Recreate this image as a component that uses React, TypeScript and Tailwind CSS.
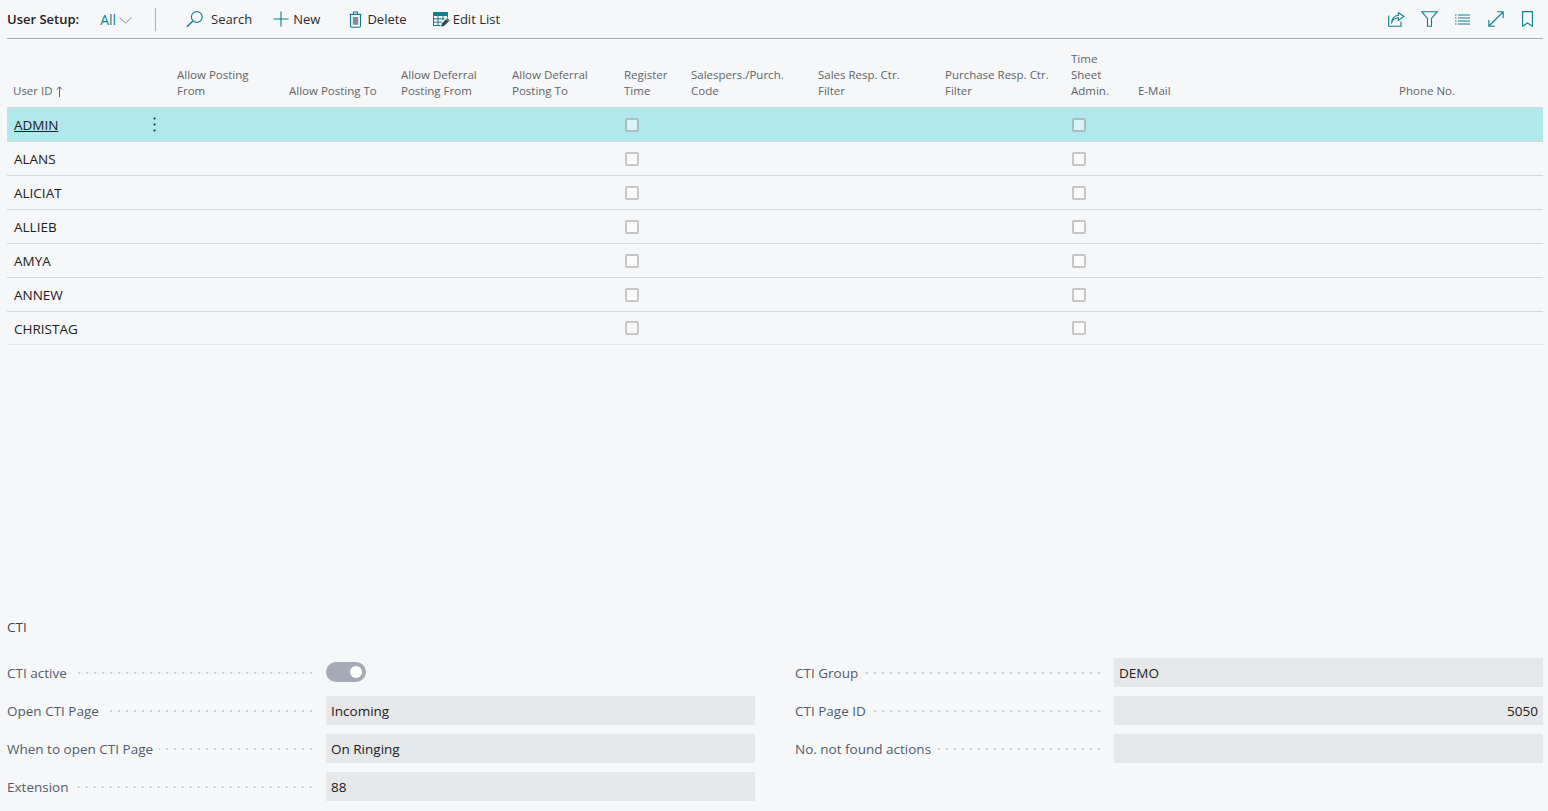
const columns = "grid grid-cols-[164px_112px_112px_111px_112px_67px_127px_127px_126px_67px_261px_1fr]";

const users = ["ADMIN", "ALANS", "ALICIAT", "ALLIEB", "AMYA", "ANNEW", "CHRISTAG"];

const Check = ({ active }: { active?: boolean }) => (
  <div
    className={
      "w-[14px] h-[14px] rounded-[2px] border-2 " +
      (active ? "bg-[#d8f4f7] border-[#a9bcc0]" : "bg-[#fbfbfc] border-[#c4c6c8]")
    }
  ></div>
);

const SearchIcon = () => (
  <svg width="18" height="18" viewBox="0 0 18 18" fill="none" stroke="#0f7f8c" strokeWidth="1.1">
    <circle cx="10.8" cy="7" r="5.4" />
    <path d="M6.9 10.9L1 16.8" strokeWidth="1.4" />
  </svg>
);

const PlusIcon = () => (
  <svg width="16" height="16" viewBox="0 0 16 16" fill="none" stroke="#0f7f8c" strokeWidth="1.1">
    <path d="M8 .5V15.5M.5 8H15.5" />
  </svg>
);

const TrashIcon = () => (
  <svg width="13" height="17" viewBox="0 0 13 17" fill="none" stroke="#0f7f8c" strokeWidth="1.1">
    <path d="M1.5 3.5H11.5V15C11.5 15.8 11 16.2 10.3 16.2H2.7C2 16.2 1.5 15.8 1.5 15Z" />
    <path d="M.5 3.2H12.5M4.5 3V1H8.5V3" />
    <path d="M3.8 6H9.2V13.8H3.8Z" fill="#7f8f98" stroke="none" />
  </svg>
);

const EditListIcon = () => (
  <svg width="17" height="15" viewBox="0 0 17 15" fill="none">
    <path d="M.5 .5H14.5V3.5H.5Z" fill="#0f7f8c" stroke="#0f7f8c" />
    <path d="M.5 3.5V13.5H7.5M5 3.5V13.5M10 3.5V8M.5 6.8H11.5M.5 10.2H8.5M14.5 3.5V5.5" stroke="#0f7f8c" />
    <path d="M8 14.7L9 11.3L14.3 6L16.7 8.4L11.4 13.7Z" fill="#3a4654" />
    <path d="M13.4 6.9L15.8 9.3" stroke="#f6f7f9" strokeWidth="0.6" />
  </svg>
);

const ShareIcon = () => (
  <svg width="17" height="15" viewBox="0 0 17 15" fill="none" stroke="#0f7f8c" strokeWidth="1.1">
    <path d="M.7 3.5V14.3H13V9.5" />
    <path d="M3.5 11.5C4 8 6.5 6 10.3 5.7V8.5L16 4.2L10.3 .7V3.2C6 3.5 3.5 7 3.5 11.5Z" />
  </svg>
);

const FilterIcon = () => (
  <svg width="17" height="16" viewBox="0 0 17 16" fill="none" stroke="#0f7f8c" strokeWidth="1.1">
    <path d="M.7 .7H16.3L10.5 7.5V15.3H6.5V7.5Z" />
  </svg>
);

const ListIcon = () => (
  <svg width="15" height="11" viewBox="0 0 15 11" fill="none" stroke="#0f7f8c" strokeWidth="1">
    <path d="M0 1H1.5M3 1H15M0 4H1.5M3 4H15M0 7H1.5M3 7H15M0 10H1.5M3 10H15" />
  </svg>
);

const ExpandIcon = () => (
  <svg width="16" height="16" viewBox="0 0 16 16" fill="none" stroke="#0f7f8c" strokeWidth="1.1">
    <path d="M1 15L15 1M9 .8H15.2V7M.8 9V15.2H7" />
  </svg>
);

const BookmarkIcon = () => (
  <svg width="11" height="16" viewBox="0 0 11 16" fill="none" stroke="#0f7f8c" strokeWidth="1.1">
    <path d="M.6 .6H10.4V15.2L5.5 12L.6 15.2Z" />
  </svg>
);

const SortArrow = () => (
  <svg className="inline-block ml-[3px] mb-[1px]" width="7" height="11" viewBox="0 0 7 11" fill="none" stroke="#5f6468">
    <path d="M3.5 11V1M.8 3.5L3.5 .8L6.2 3.5" />
  </svg>
);

const Action = ({ icon, label, className }: { icon: React.ReactNode; label: string; className: string }) => (
  <div className={"flex items-center text-[13px] text-[#2b2b2b] " + className}>
    {icon}
    <span className="mt-[2px]">{label}</span>
  </div>
);

const Header = ({ children }: { children: React.ReactNode }) => (
  <div className="flex items-end pb-[8px] pl-[6px] text-[11.5px] leading-[16px] text-[#5f6468]">
    <div>{children}</div>
  </div>
);

const Label = ({ text }: { text: string }) => (
  <div className="w-[319px] shrink-0 flex items-center pr-[11px]">
    <span className="mt-[2px] text-[13.5px] text-[#505c6b] whitespace-nowrap mr-[6px]">{text}</span>
    <div className="flex-1 h-[4px] bg-[radial-gradient(circle,#c9ccd0_1px,transparent_1.2px)] bg-[length:8px_4px] bg-right"></div>
  </div>
);

const Field = ({ label, value, right }: { label: string; value?: string; right?: boolean }) => (
  <div className="flex items-center h-[29px]">
    <Label text={label} />
    <div
      className={
        "flex-1 h-[29px] bg-[#e6e7e9] flex items-center px-[5px] text-[13.5px] text-[#212121] " +
        (right ? "justify-end" : "")
      }
    >
      <span className="mt-[2px]">{value}</span>
    </div>
  </div>
);

const App = () => {
  return (
    <div className="h-[811px] overflow-hidden flex flex-col bg-[#f6f7f9] pl-[7px] pr-[5px] font-['Open_Sans','Noto_Sans',sans-serif]">
      <div className="h-[39px] shrink-0 flex items-center border-b border-[#a9afb6]">
        <span className="mt-[2px] text-[13px] font-semibold text-[#212121]">User Setup:</span>
        <span className="ml-[21px] text-[14px] font-medium text-[#0f7f8c]">All</span>
        <svg className="ml-[3px] mt-[3px]" width="13" height="7" viewBox="0 0 13 7" fill="none" stroke="#7d8a94">
          <path d="M.5 .5L6.5 6L12.5 .5" />
        </svg>
        <div className="ml-[23px] w-px h-[23px] bg-[#a9afb6]"></div>
        <div className="ml-[30px] flex items-center">
          <Action className="gap-[7px]" icon={<SearchIcon />} label="Search" />
          <Action className="gap-[4px] ml-[21px]" icon={<PlusIcon />} label="New" />
          <Action className="gap-[5px] ml-[29px]" icon={<TrashIcon />} label="Delete" />
          <Action className="gap-[3px] ml-[26px]" icon={<EditListIcon />} label="Edit List" />
        </div>
        <div className="ml-auto flex items-center pr-[5px]">
          <div className="w-[33px] flex justify-center"><ShareIcon /></div>
          <div className="w-[33px] flex justify-center"><FilterIcon /></div>
          <div className="w-[33px] flex justify-center"><ListIcon /></div>
          <div className="w-[33px] flex justify-center"><ExpandIcon /></div>
          <div className="w-[26px] flex justify-center pl-[4px]"><BookmarkIcon /></div>
        </div>
      </div>

      <div className={columns + " h-[69px] shrink-0 border-b border-[#d6d7d9]"}>
        <Header>User ID<SortArrow /></Header>
        <Header>Allow Posting<br />From</Header>
        <Header>Allow Posting To</Header>
        <Header>Allow Deferral<br />Posting From</Header>
        <Header>Allow Deferral<br />Posting To</Header>
        <Header>Register<br />Time</Header>
        <Header>Salespers./Purch.<br />Code</Header>
        <Header>Sales Resp. Ctr.<br />Filter</Header>
        <Header>Purchase Resp. Ctr.<br />Filter</Header>
        <Header>Time<br />Sheet<br />Admin.</Header>
        <Header>E-Mail</Header>
        <Header>Phone No.</Header>
      </div>

      {users.map((user, i) => (
        <div
          key={user}
          className={
            columns +
            " shrink-0 items-center border-b text-[13.5px] text-[#212121] " +
            (i === 6 ? "h-[33px] border-[#e3e4e6] " : "h-[34px] border-[#d6d7d9] ") +
            (i === 0 ? "bg-[#b0e8ec]" : "")
          }
        >
          <div className="flex items-center justify-between pl-[7px] pr-[15px]">
            <span className={"mt-[2px] " + (i === 0 ? "underline" : "")}>{user}</span>
            {i === 0 && (
              <svg width="3" height="15" viewBox="0 0 3 15" fill="#212121">
                <circle cx="1.5" cy="1.5" r="1" />
                <circle cx="1.5" cy="7.5" r="1" />
                <circle cx="1.5" cy="13.5" r="1" />
              </svg>
            )}
          </div>
          <div></div>
          <div></div>
          <div></div>
          <div></div>
          <div className="pl-[7px]"><Check active={i === 0} /></div>
          <div></div>
          <div></div>
          <div></div>
          <div className="pl-[7px]"><Check active={i === 0} /></div>
          <div></div>
          <div></div>
        </div>
      ))}

      <div className="flex-1"></div>

      <div className="h-[201px] shrink-0">
        <div className="text-[13.5px] font-medium text-[#3a4654] h-[48px] pt-[7px]">CTI</div>
        <div className="grid grid-cols-[748px_748px] gap-x-[40px]">
          <div className="flex flex-col gap-[9px]">
            <div className="flex items-center h-[29px]">
              <Label text="CTI active" />
              <div className="mb-[2px] w-[40px] h-[20px] rounded-full bg-[#a5aab4] flex items-center justify-end pr-[4px]">
                <div className="w-[12px] h-[12px] rounded-full bg-white"></div>
              </div>
            </div>
            <Field label="Open CTI Page" value="Incoming" />
            <Field label="When to open CTI Page" value="On Ringing" />
            <Field label="Extension" value="88" />
          </div>
          <div className="flex flex-col gap-[9px]">
            <Field label="CTI Group" value="DEMO" />
            <Field label="CTI Page ID" value="5050" right />
            <Field label="No. not found actions" />
          </div>
        </div>
      </div>
    </div>
  );
};

export default App;
